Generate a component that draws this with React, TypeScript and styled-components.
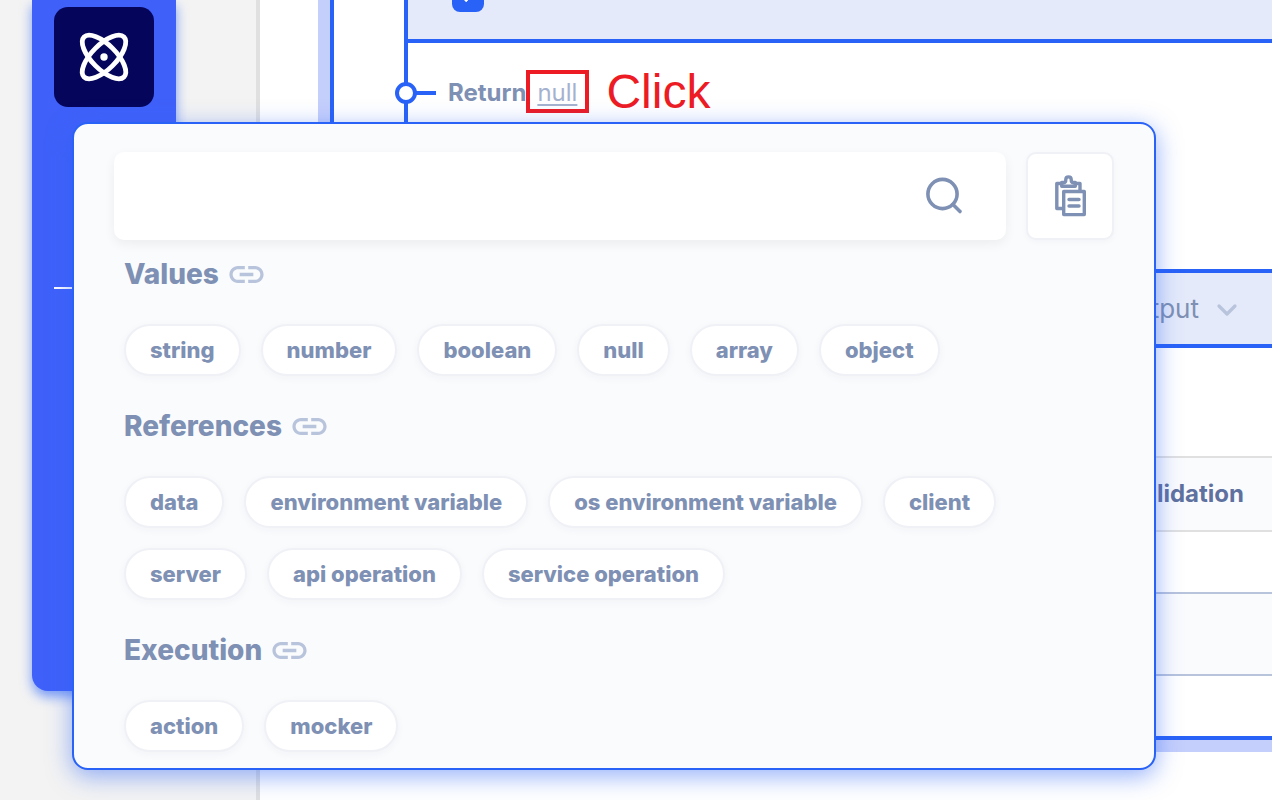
import React from "react";
import styled, { createGlobalStyle } from "styled-components";

const blue = "#2962f6";
const slate = "#7e90b3";
const tint = "#e4eafa";
const paper = "#fafbfd";

const GlobalStyle = createGlobalStyle`
  *, *::before, *::after { box-sizing: border-box; }
  body { margin: 0; background: #fff; font-family: Inter, "Liberation Sans", sans-serif; color: ${slate}; overflow: hidden; }
  button, input, select { font: inherit; color: inherit; }
`;

const Shell = styled.div`
  position: relative;
  display: flex;
  min-height: 100vh;
  overflow: hidden;
`;

const Side = styled.aside`
  flex: 0 0 260px;
  padding-left: 32px;
  background: #f3f3f3;
  border-right: 4px solid #e0e0e0;
`;

const Rail = styled.nav`
  display: flex;
  flex-direction: column;
  align-items: center;
  gap: 180px;
  width: 144px;
  height: 691px;
  padding: 7px 22px 0;
  background: #3f61fa;
  border-radius: 0 0 16px 16px;
  box-shadow: 0 6px 12px rgba(41, 98, 246, 0.6);
`;

const RailButton = styled.button`
  display: grid;
  place-items: center;
  width: 100px;
  height: 100px;
  padding: 0;
  border: 0;
  border-radius: 14px;
  background: #05055c;
`;

const RailDivider = styled.hr`
  width: 100%;
  height: 2px;
  margin: 0;
  border: 0;
  background: #fff;
`;

const Main = styled.main`
  flex: 1;
  min-width: 0;
  padding-left: 70px;
`;

const Block = styled.section`
  height: 752px;
  margin: -12px -12px 0 0;
  padding: 12px 12px 0 70px;
  border-left: 4px solid ${blue};
  border-bottom: 4px solid ${blue};
  box-shadow: -12px 12px 0 #c5cffc;
`;

const Flow = styled.div`
  border-left: 4px solid ${blue};
`;

const FlowHeader = styled.div`
  display: flex;
  align-items: flex-end;
  height: 43px;
  padding: 0 44px 27px;
  overflow: hidden;
  background: ${tint};
  border-bottom: 4px solid ${blue};
`;

const Check = styled.input`
  appearance: none;
  position: relative;
  flex: none;
  width: 32px;
  height: 32px;
  margin: 0;
  border-radius: 8px;
  background: ${blue};

  &:checked::before {
    content: "";
    position: absolute;
    top: 3px;
    left: 12px;
    width: 10px;
    height: 18px;
    border: solid #fff;
    border-width: 0 4px 4px 0;
    transform: rotate(45deg);
  }
`;

const ReturnRow = styled.div`
  display: flex;
  align-items: center;
  height: 100px;
  margin-left: -13px;
  font-size: 24px;
  line-height: 32px;
`;

const Connector = styled.svg`
  flex: none;
  margin-right: 12px;
`;

const ReturnLabel = styled.span`
  font-weight: 700;
`;

const NullFrame = styled.span`
  display: flex;
  align-items: center;
  height: 43px;
  margin-bottom: 3px;
  padding: 3px 8px 0 7px;
  border: 4px solid #ed1c24;
`;

const NullLink = styled.a`
  color: #a5b2cf;
  text-decoration: underline;
  text-decoration-thickness: 2px;
  text-underline-offset: 3px;
`;

const Note = styled.span`
  margin: 0 0 2px 17px;
  color: #ed1c24;
  font-family: "Liberation Sans", sans-serif;
  font-size: 48px;
`;

const OutputBar = styled.div`
  display: flex;
  align-items: center;
  justify-content: flex-end;
  gap: 16px;
  height: 79px;
  margin-top: 126px;
  padding-right: 33px;
  background: ${tint};
  border-top: 4px solid ${blue};
  border-bottom: 4px solid ${blue};
  font-size: 26px;
`;

const Table = styled.table`
  width: 100%;
  margin-top: 108px;
  border-collapse: separate;
  border-spacing: 0;
`;

const HeadCell = styled.th`
  height: 76px;
  padding: 0 28px 2px 0;
  background: ${paper};
  border-top: 2px solid #e0e0e0;
  border-bottom: 2px solid #e0e0e0;
  color: #5f719f;
  font-size: 24px;
  font-weight: 700;
  text-align: right;
`;

const Cell = styled.td<{ $h: number; $shade?: boolean }>`
  height: ${(p) => p.$h}px;
  padding: 0;
  background: ${(p) => (p.$shade ? paper : "#fff")};
  border-bottom: 2px solid #b8c3dc;
`;

const Popup = styled.div`
  position: absolute;
  top: 122px;
  left: 72px;
  right: 116px;
  padding: 28px 40px 16px;
  background: ${paper};
  border: 2px solid ${blue};
  border-radius: 16px;
  box-shadow: 0 6px 24px rgba(41, 98, 246, 0.5);
`;

const SearchRow = styled.div`
  display: flex;
  gap: 20px;
  margin-bottom: 18px;
`;

const SearchBox = styled.label`
  display: flex;
  flex: 1;
  align-items: center;
  height: 88px;
  padding: 0 40px;
  background: #fff;
  border-radius: 10px;
  box-shadow: 0 4px 12px rgba(0, 0, 0, 0.06);
`;

const SearchInput = styled.input`
  flex: 1;
  min-width: 0;
  padding: 0;
  border: 0;
  outline: 0;
  background: transparent;
  font-size: 24px;
`;

const PasteButton = styled.button`
  display: grid;
  place-items: center;
  width: 88px;
  height: 88px;
  padding: 0;
  background: #fff;
  border: 2px solid #f0f1f6;
  border-radius: 10px;
  box-shadow: 0 2px 6px rgba(30, 40, 70, 0.03);
`;

const Group = styled.section`
  padding-left: 10px;

  & + & {
    margin-top: 34px;
  }
`;

const GroupTitle = styled.h2`
  display: flex;
  align-items: center;
  gap: 7px;
  height: 32px;
  margin: 0 0 34px;
  font-size: 28px;
  font-weight: 800;
  line-height: 32px;
`;

const Pills = styled.div`
  display: flex;
  flex-wrap: wrap;
  gap: 20px;
`;

const Pill = styled.button`
  height: 52px;
  padding: 0 24px;
  background: #fff;
  border: 2px solid #f0f1f6;
  border-radius: 26px;
  box-shadow: 0 2px 8px rgba(30, 40, 70, 0.04);
  font-size: 22px;
  font-weight: 800;
`;

const AtomIcon = () => (
  <svg width="56" height="56" viewBox="-28 -28 56 56" fill="none" stroke="#fff" strokeWidth="4.800" aria-hidden="true">
    <ellipse rx="28.200" ry="12.200" transform="rotate(45)" />
    <ellipse rx="28.200" ry="12.200" transform="rotate(-45)" />
    <circle r="3.700" fill="#fff" stroke="none" />
  </svg>
);

const SearchIcon = () => (
  <svg width="44" height="44" viewBox="0 0 44 44" fill="none" stroke={slate} strokeWidth="3.600" strokeLinecap="round" aria-hidden="true">
    <circle cx="20.500" cy="20" r="14.600" />
    <path d="M31 30.500L38 37.500" />
  </svg>
);

const PasteIcon = () => (
  <svg width="36" height="44" viewBox="1052 174 36 44" fill="none" stroke={slate} strokeWidth="3.400" strokeLinejoin="round" aria-hidden="true">
    <path d="M1062 208.500H1056.800V183.500H1061M1076 183.500H1080V190" />
    <path d="M1061.700 186.200V182.500H1064C1065.800 182.500 1065.800 180.500 1065.800 179.500C1065.800 176 1071.200 176 1071.200 179.500C1071.200 180.500 1071.200 182.500 1073 182.500H1075.300V186.200Z" />
    <path d="M1063.700 191.500H1084.300V214.600H1063.700Z" />
    <path d="M1069 199.500H1079M1069 206H1079" strokeLinecap="round" />
  </svg>
);

const LinkIcon = () => (
  <svg width="41" height="41" viewBox="0 0 24 24" fill="#b8c3dc" aria-hidden="true">
    <path d="M3.900 12c0-1.710 1.390-3.100 3.100-3.100h4V7H7c-2.760 0-5 2.240-5 5s2.240 5 5 5h4v-1.900H7c-1.710 0-3.100-1.390-3.100-3.100zM8 13h8v-2H8v2zm9-6h-4v1.900h4c1.710 0 3.100 1.390 3.100 3.100s-1.390 3.100-3.100 3.100h-4V17h4c2.760 0 5-2.240 5-5s-2.240-5-5-5z" />
  </svg>
);

const groups = [
  { title: "Values", items: ["string", "number", "boolean", "null", "array", "object"] },
  {
    title: "References",
    items: ["data", "environment variable", "os environment variable", "client", "server", "api operation", "service operation"],
  },
  { title: "Execution", items: ["action", "mocker"] },
];

export default function App() {
  return (
    <>
      <GlobalStyle />
      <Shell>
        <Side>
          <Rail>
            <RailButton aria-label="Operations">
              <AtomIcon />
            </RailButton>
            <RailDivider />
          </Rail>
        </Side>
        <Main>
          <Block>
            <Flow>
              <FlowHeader>
                <Check type="checkbox" defaultChecked aria-label="Enabled" />
              </FlowHeader>
              <ReturnRow>
                <Connector width="41" height="24" viewBox="0 0 41 24" fill="none" stroke={blue} strokeWidth="4" aria-hidden="true">
                  <path d="M21 12H41" />
                  <circle cx="11" cy="12" r="9" fill="#fff" />
                </Connector>
                <ReturnLabel>Return</ReturnLabel>
                <NullFrame>
                  <NullLink href="#value">null</NullLink>
                </NullFrame>
                <Note>Click</Note>
              </ReturnRow>
              <OutputBar>
                Output
                <svg width="24" height="24" viewBox="0 0 24 24" fill="none" stroke="#b8c3dc" strokeWidth="3.200" strokeLinecap="round" strokeLinejoin="round" aria-hidden="true">
                  <path d="M4 9L12 17L20 9" />
                </svg>
              </OutputBar>
            </Flow>
            <Table>
              <thead>
                <tr>
                  <HeadCell>Validation</HeadCell>
                </tr>
              </thead>
              <tbody>
                <tr>
                  <Cell $h={62} />
                </tr>
                <tr>
                  <Cell $h={82} $shade />
                </tr>
              </tbody>
            </Table>
          </Block>
        </Main>
        <Popup role="dialog" aria-label="Choose a value">
          <SearchRow>
            <SearchBox>
              <SearchInput type="search" aria-label="Search" />
              <SearchIcon />
            </SearchBox>
            <PasteButton aria-label="Paste">
              <PasteIcon />
            </PasteButton>
          </SearchRow>
          {groups.map((group) => (
            <Group key={group.title}>
              <GroupTitle>
                {group.title}
                <LinkIcon />
              </GroupTitle>
              <Pills>
                {group.items.map((item) => (
                  <Pill key={item}>{item}</Pill>
                ))}
              </Pills>
            </Group>
          ))}
        </Popup>
      </Shell>
    </>
  );
}
